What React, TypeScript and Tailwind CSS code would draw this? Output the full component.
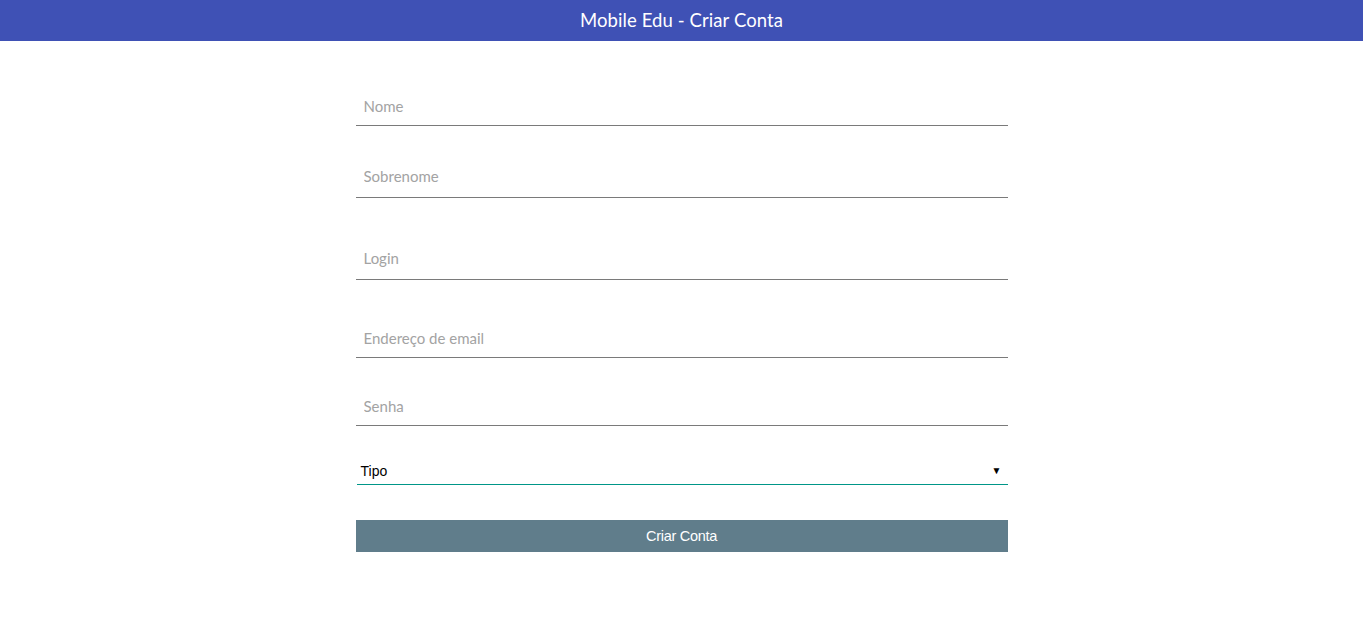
const FIELDS = [
  { label: 'Nome', type: 'text', cls: 'mt-[46px] pb-0' },
  { label: 'Sobrenome', type: 'text', cls: 'mt-[33px] pb-[4px]' },
  { label: 'Login', type: 'text', cls: 'mt-[43px] pb-[4px]' },
  { label: 'Endereço de email', type: 'email', cls: 'mt-[39px] pb-0' },
  { label: 'Senha', type: 'password', cls: 'mt-[29px] pb-0' },
]

export default function App() {
  return (
    <div className="min-h-screen bg-white font-['Lato','Noto_Sans',sans-serif]">
      <header className="h-[41px] bg-[#3f51b5] flex items-center justify-center">
        <h1 className="text-[18.5px] text-white tracking-[0.1px]">Mobile Edu - Criar Conta</h1>
      </header>

      <form className="w-[652px] mx-auto flex flex-col" onSubmit={(e) => e.preventDefault()}>
        {FIELDS.map(({ label, type, cls }) => (
          <input
            key={label}
            type={type}
            placeholder={label}
            className={`${cls} h-[39px] w-full border-b border-[#7a7a7a] pl-2 pt-0 text-[15px] text-[#333] placeholder:text-[#a3a3a3] outline-none`}
          />
        ))}

        <div className="mt-[31px] ml-px relative h-[28px] border-b border-[#009688] flex items-center">
          <span className="pl-1 pt-[1px] text-[14px] text-black font-['Liberation_Sans',Arial,sans-serif]">Tipo</span>
          <span className="absolute right-[6px] top-[8px] text-[10px] leading-none text-black">▼</span>
        </div>

        <button
          type="submit"
          className="mt-[35px] h-[32px] w-full pt-[2px] bg-[#607d8b] text-white text-[14.5px] font-['Liberation_Sans',Arial,sans-serif] tracking-[-0.3px]"
        >
          Criar Conta
        </button>
      </form>
    </div>
  )
}
